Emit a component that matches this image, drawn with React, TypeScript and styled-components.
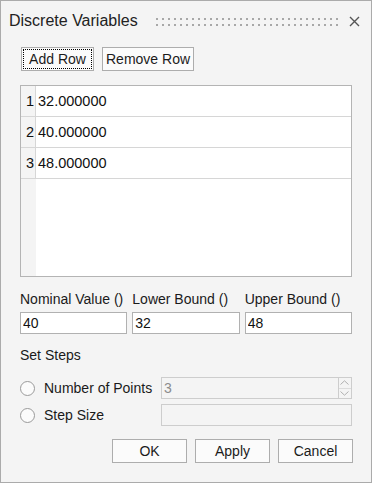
import React from "react";
import styled, { createGlobalStyle } from "styled-components";

const GlobalStyle = createGlobalStyle`
  html, body {
    margin: 0;
    padding: 0;
    background: #f4f4f4;
  }
  body {
    font-family: "Liberation Sans", Arial, sans-serif;
    color: #1a1a1a;
  }
  * { box-sizing: border-box; }
`;

const Window = styled.div`
  width: 372px;
  height: 483px;
  border: 1px solid #ababab;
  background: #f4f4f4;
  display: flex;
  flex-direction: column;
`;

const TitleBar = styled.div`
  height: 40px;
  display: flex;
  align-items: center;
  padding: 0 11px 0 8px;
`;

const Title = styled.div`
  font-size: 16px;
  color: #222;
  white-space: nowrap;
`;

const Grip = styled.svg`
  flex: 1;
  height: 8px;
  margin: 2px 11px 0 18px;
`;

const CloseButton = styled.button`
  width: 11px;
  height: 11px;
  padding: 0;
  border: none;
  background: none;
  display: flex;
  margin-top: 1px;
`;

const Body = styled.div`
  padding: 0 19px;
  display: flex;
  flex-direction: column;
`;

const Toolbar = styled.div`
  display: flex;
  gap: 8px;
  margin: 6px 0 0 1px;
`;

const PushButton = styled.button<{ $focused?: boolean; $wide?: boolean }>`
  height: 24px;
  min-width: ${(p) => (p.$wide ? "75px" : "73px")};
  padding: 0 3px;
  border: 1px solid #adadad;
  background: #fbfbfb;
  font-family: "Liberation Sans", Arial, sans-serif;
  font-size: 14px;
  color: #1b1b1b;
  outline: ${(p) => (p.$focused ? "1px dotted #000" : "none")};
  outline-offset: -3px;
`;

const Table = styled.div`
  margin-top: 14px;
  height: 192px;
  border: 1px solid #b4b4b4;
  background: linear-gradient(to right, #f4f4f4 15px, #ffffff 15px);
  display: flex;
  flex-direction: column;
`;

const TableRow = styled.div`
  display: grid;
  grid-template-columns: 15px 1fr;
  height: 31px;
  border-bottom: 1px solid #d6d6d6;
  font-size: 14.5px;
  color: #111;
`;

const RowHeader = styled.div`
  border-right: 1px solid #d6d6d6;
  display: flex;
  align-items: center;
  justify-content: flex-end;
  padding-right: 1px;
  background: #f4f4f4;
`;

const Cell = styled.div`
  display: flex;
  align-items: center;
  padding-left: 2px;
  background: #fff;
`;

const FieldGrid = styled.div`
  margin-top: 14px;
  display: grid;
  grid-template-columns: repeat(3, 1fr);
  column-gap: 5px;
  row-gap: 5px;
`;

const Label = styled.div`
  font-size: 14px;
  line-height: 16px;
  color: #1a1a1a;
  white-space: nowrap;
`;

const TextField = styled.input<{ $disabled?: boolean }>`
  height: 22px;
  width: 100%;
  min-width: 0;
  border: 1px solid ${(p) => (p.$disabled ? "#cdcdcd" : "#b1b1b1")};
  background: ${(p) => (p.$disabled ? "#f4f4f4" : "#fff")};
  padding: 0 2px;
  font-family: "Liberation Sans", Arial, sans-serif;
  font-size: 14px;
  color: ${(p) => (p.$disabled ? "#8c8c8c" : "#111")};
  outline: none;
`;

const SectionLabel = styled(Label)`
  margin-top: 13px;
`;

const Options = styled.div`
  margin-top: 14px;
  display: grid;
  grid-template-columns: 141px 1fr;
  row-gap: 5px;
  align-items: center;
`;

const RadioLabel = styled.label`
  display: flex;
  align-items: center;
  gap: 9px;
  font-size: 14px;
  color: #1a1a1a;
`;

const RadioCircle = styled.span`
  width: 15px;
  height: 15px;
  border-radius: 50%;
  border: 1px solid #9a9a9a;
  background: #fbfbfb;
`;

const SpinBox = styled.div`
  display: flex;
  height: 22px;
`;

const SpinButtons = styled.div`
  width: 14px;
  display: flex;
  flex-direction: column;
  border: 1px solid #cdcdcd;
  border-left: none;
`;

const SpinButton = styled.div<{ $top?: boolean }>`
  flex: 1;
  display: flex;
  align-items: center;
  justify-content: center;
  border-top: ${(p) => (p.$top ? "none" : "1px solid #dcdcdc")};
  background: #f4f4f4;
`;

const Footer = styled.div`
  margin-top: 13px;
  display: flex;
  justify-content: flex-end;
  gap: 8px;
  margin-right: -1px;
`;

const rows = ["32.000000", "40.000000", "48.000000"];

const Chevron = ({ up }: { up?: boolean }) => (
  <svg width="9" height="5" viewBox="0 0 9 5">
    <path
      d={up ? "M0.5 4.5 L4.5 0.8 L8.5 4.5" : "M0.5 0.5 L4.5 4.2 L8.5 0.5"}
      fill="none"
      stroke="#b0b0b0"
      strokeWidth="1"
    />
  </svg>
);

export default function App() {
  return (
    <>
      <GlobalStyle />
      <Window>
        <TitleBar>
          <Title>Discrete Variables</Title>
          <Grip>
            <defs>
              <pattern id="dots" width="6" height="6" patternUnits="userSpaceOnUse">
                <rect x="0" y="0" width="2" height="2" fill="#a8a8a8" />
              </pattern>
            </defs>
            <rect x="0" y="0" width="182" height="8" fill="url(#dots)" />
          </Grip>
          <CloseButton>
            <svg width="11" height="11" viewBox="0 0 11 11">
              <path d="M1 1 L10 10 M10 1 L1 10" stroke="#555" strokeWidth="1.4" />
            </svg>
          </CloseButton>
        </TitleBar>
        <Body>
          <Toolbar>
            <PushButton $focused>Add Row</PushButton>
            <PushButton>Remove Row</PushButton>
          </Toolbar>
          <Table>
            {rows.map((v, i) => (
              <TableRow key={v}>
                <RowHeader>{i + 1}</RowHeader>
                <Cell>{v}</Cell>
              </TableRow>
            ))}
          </Table>
          <FieldGrid>
            <Label>Nominal Value ()</Label>
            <Label>Lower Bound ()</Label>
            <Label>Upper Bound ()</Label>
            <TextField defaultValue="40" />
            <TextField defaultValue="32" />
            <TextField defaultValue="48" />
          </FieldGrid>
          <SectionLabel>Set Steps</SectionLabel>
          <Options>
            <RadioLabel>
              <RadioCircle />
              Number of Points
            </RadioLabel>
            <SpinBox>
              <TextField $disabled defaultValue="3" readOnly />
              <SpinButtons>
                <SpinButton $top>
                  <Chevron up />
                </SpinButton>
                <SpinButton>
                  <Chevron />
                </SpinButton>
              </SpinButtons>
            </SpinBox>
            <RadioLabel>
              <RadioCircle />
              Step Size
            </RadioLabel>
            <TextField $disabled readOnly />
          </Options>
          <Footer>
            <PushButton $wide>OK</PushButton>
            <PushButton $wide>Apply</PushButton>
            <PushButton $wide>Cancel</PushButton>
          </Footer>
        </Body>
      </Window>
    </>
  );
}
